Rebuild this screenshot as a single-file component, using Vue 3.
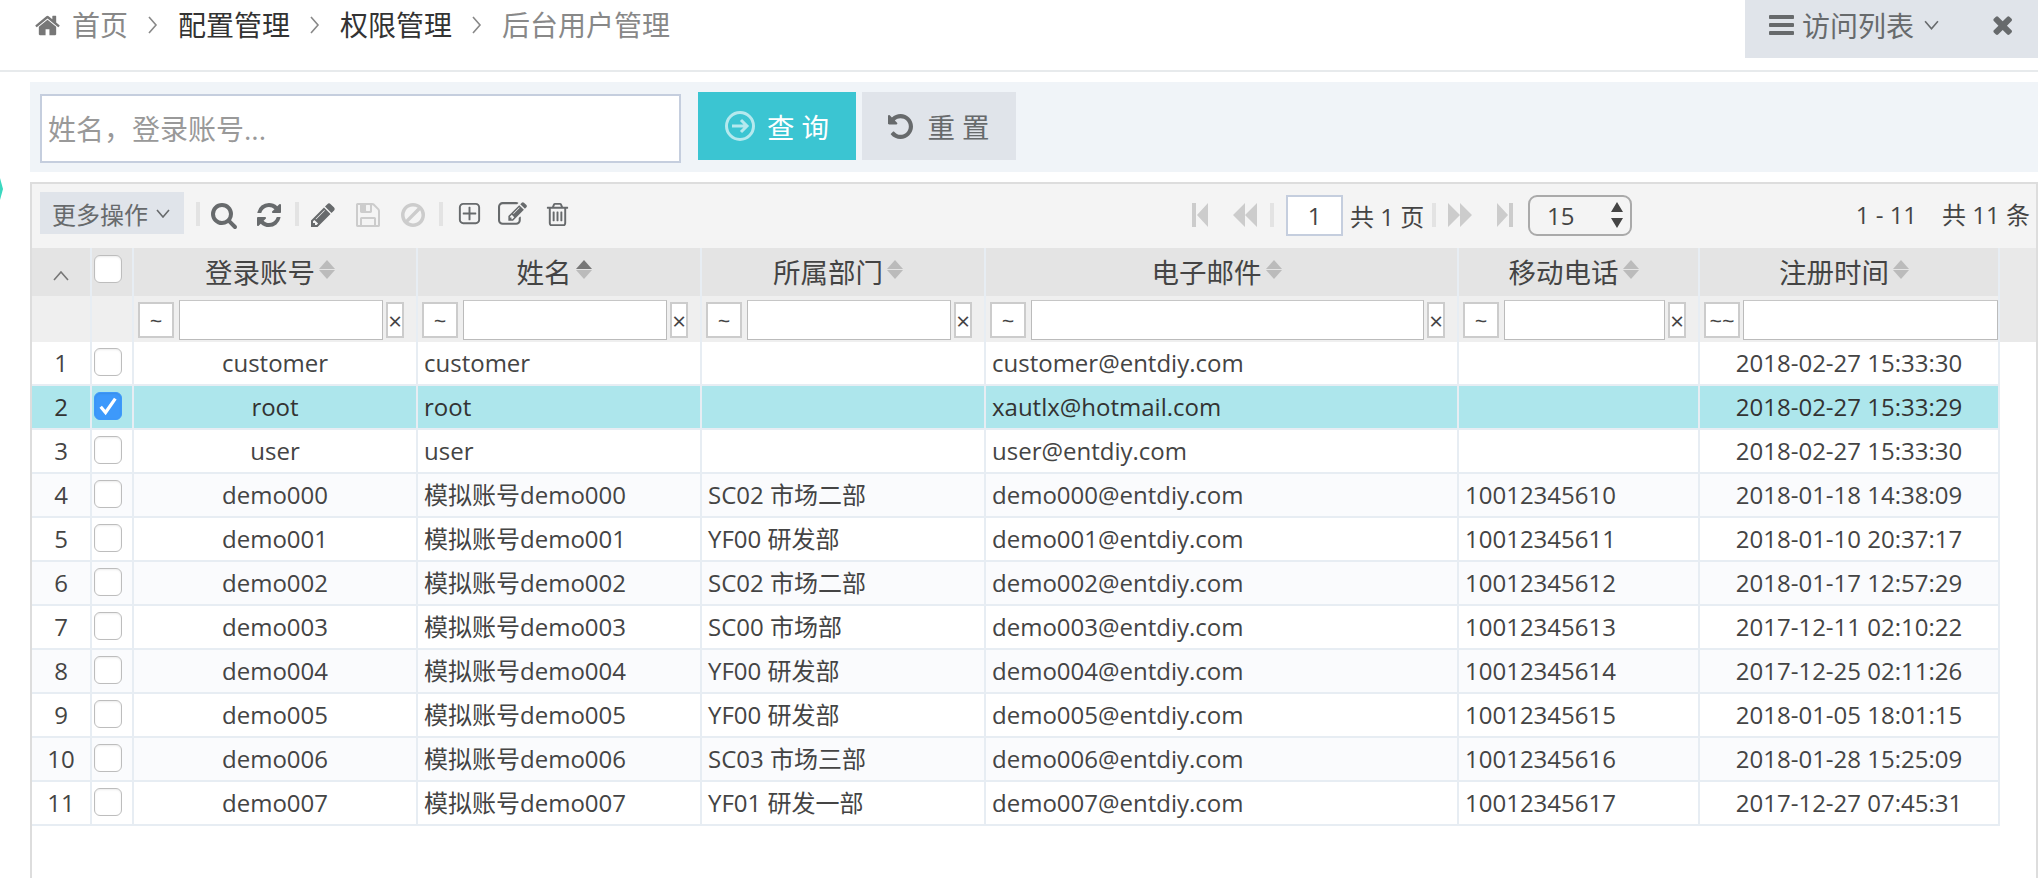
<template>
  <div class="page">
    <span class="edge-mark"></span>

    <header class="topbar">
      <nav class="crumbs">
        <svg class="ico home" viewBox="0 0 1792 1792"><path :d="icons.home" /></svg>
        <span class="crumb first">首页</span>
        <template v-for="(c, i) in crumbs" :key="c">
          <svg class="sep-chev" viewBox="0 0 10 20"><path d="M1 2l7 8-7 8" /></svg>
          <span class="crumb" :class="{ last: i === crumbs.length - 1 }">{{ c }}</span>
        </template>
      </nav>
      <div class="tabs-tool">
        <svg class="ico bars" viewBox="128 256 1536 1280" preserveAspectRatio="none"><path :d="icons.bars" /></svg>
        <span class="tabs-label">访问列表</span>
        <svg class="tabs-chev" viewBox="0 0 14 9"><path d="M1 1l6 7 6-7" /></svg>
        <svg class="ico closer" viewBox="150 350 1340 1204" preserveAspectRatio="none"><path :d="icons.times" /></svg>
      </div>
    </header>

    <section class="search">
      <input class="search-input" placeholder="姓名，登录账号..." />
      <button class="btn primary">
        <svg class="arrow-circle" viewBox="0 0 30 30">
          <circle cx="15" cy="15" r="13.5" />
          <path d="M7 15h15M16 9l6 6-6 6" />
        </svg>
        <span>查 询</span>
      </button>
      <button class="btn plain">
        <svg class="ico undo" viewBox="128 128 1536 1536"><path :d="icons.undo" /></svg>
        <span>重 置</span>
      </button>
    </section>

    <section class="grid">
      <div class="toolbar">
        <button class="more">更多操作<svg viewBox="0 0 14 9"><path d="M1 1l6 7 6-7" /></svg></button>
        <i class="tb-sep"></i>
        <svg class="tool" viewBox="0 0 1792 1792"><path :d="icons.search" /></svg>
        <svg class="tool" viewBox="0 0 1792 1792"><path :d="icons.refresh" /></svg>
        <i class="tb-sep"></i>
        <svg class="tool" viewBox="0 0 1792 1792"><path :d="icons.pencil" /></svg>
        <svg class="tool off" viewBox="0 0 1792 1792"><path :d="icons.save" /></svg>
        <svg class="tool off" viewBox="0 0 1792 1792"><path :d="icons.ban" /></svg>
        <i class="tb-sep"></i>
        <svg class="tool plus" viewBox="0 0 1792 1792"><path :d="icons.plus" /></svg>
        <svg class="tool edit" viewBox="0 0 1792 1792"><path :d="icons.edit" /></svg>
        <svg class="tool trash" viewBox="0 0 1792 1792"><path :d="icons.trash" /></svg>

        <div class="pager">
          <svg class="pg first-pg" viewBox="0 0 16 24"><path d="M0 0h4v24H0zM5 12L16 0v24z" /></svg>
          <svg class="pg double" viewBox="0 0 24 24"><path d="M0 12L12 0v24zM12 12L24 0v24z" /></svg>
          <i class="pg-sep"></i>
          <input class="page-no" value="1" />
          <span class="page-total">共 1 页</span>
          <i class="pg-sep"></i>
          <svg class="pg double next" viewBox="0 0 24 24"><path d="M0 0l12 12L0 24zM12 0l12 12-12 12z" /></svg>
          <svg class="pg last-pg" viewBox="0 0 16 24"><path d="M0 0l11 12L0 24zM12 0h4v24h-4z" /></svg>
          <div class="page-size">
            <span>15</span>
            <svg viewBox="0 0 12 26"><path d="M6 0l6 10H0zM0 16h12l-6 10z" /></svg>
          </div>
        </div>
        <div class="info"><span>1 - 11</span><span>共 11 条</span></div>
      </div>

      <table class="data">
        <colgroup>
          <col v-for="w in colWidths" :key="w.id" :style="{ width: w.px + 'px' }" />
        </colgroup>
        <thead>
          <tr class="head-row">
            <th class="fold">
              <svg viewBox="0 0 16 10"><path d="M1 9l7-8 7 8" /></svg>
            </th>
            <th class="check-cell"><span class="check head-check"></span></th>
            <th v-for="c in columns" :key="c.key">
              {{ c.title }}<span class="sort" :class="{ active: c.key === 'name' }"><b></b><b></b></span>
            </th>
            <th class="filler" rowspan="2"></th>
          </tr>
          <tr class="filter-row">
            <th></th>
            <th></th>
            <th v-for="c in columns" :key="c.key">
              <div class="filter">
                <span class="op" :class="{ wide: c.key === 'time' }">{{ c.key === 'time' ? '~~' : '~' }}</span>
                <input class="filter-input" />
                <span v-if="c.key !== 'time'" class="clear">×</span>
              </div>
            </th>
          </tr>
        </thead>
        <tbody>
          <tr v-for="(r, i) in rows" :key="r.login" :class="{ selected: i === 1, odd: i % 2 === 1 }">
            <td class="num">{{ i + 1 }}</td>
            <td class="check-cell">
              <span class="check" :class="{ on: i === 1 }">
                <svg v-if="i === 1" viewBox="0 0 16 16"><path d="M3.5 8.5l3 3.5 6-8.5" /></svg>
              </span>
            </td>
            <td class="center">{{ r.login }}</td>
            <td>{{ r.name }}</td>
            <td>{{ r.dept }}</td>
            <td>{{ r.email }}</td>
            <td>{{ r.phone }}</td>
            <td class="center">{{ r.time }}</td>
          </tr>
        </tbody>
      </table>
    </section>
  </div>
</template>

<script setup>
const crumbs = ['配置管理', '权限管理', '后台用户管理']

const icons = {
  home: 'M1472 992v480q0 26-19 45t-45 19h-384v-384h-256v384h-384q-26 0-45-19t-19-45v-480q0-1 .5-3t.5-3l575-474 575 474q1 2 1 6zm223-69l-62 74q-8 9-21 11h-3q-13 0-21-7l-692-577-692 577q-12 8-24 7-13-2-21-11l-62-74q-8-10-7-23.5t11-21.5l719-599q32-26 76-26t76 26l244 204v-195q0-14 9-23t23-9h192q14 0 23 9t9 23v408l219 182q10 8 11 21.5t-7 23.5z',
  bars: 'M1664 1344v128q0 26-19 45t-45 19h-1408q-26 0-45-19t-19-45v-128q0-26 19-45t45-19h1408q26 0 45 19t19 45zm0-512v128q0 26-19 45t-45 19h-1408q-26 0-45-19t-19-45v-128q0-26 19-45t45-19h1408q26 0 45 19t19 45zm0-512v128q0 26-19 45t-45 19h-1408q-26 0-45-19t-19-45v-128q0-26 19-45t45-19h1408q26 0 45 19t19 45z',
  times: 'M1490 1322q0 40-28 68l-136 136q-28 28-68 28t-68-28l-294-294-294 294q-28 28-68 28t-68-28l-136-136q-28-28-28-68t28-68l294-294-294-294q-28-28-28-68t28-68l136-136q28-28 68-28t68 28l294 294 294-294q28-28 68-28t68 28l136 136q28 28 28 68t-28 68l-294 294 294 294q28 28 28 68z',
  undo: 'M1664 896q0 156-61 298t-164 245-245 164-298 61q-172 0-327-72.5t-264-204.5q-7-10-6.5-22.5t8.5-20.5l137-138q10-9 25-9 16 2 23 12 73 95 179 147t225 52q104 0 198.5-40.5t163.5-109.5 109.5-163.5 40.5-198.5-40.5-198.5-109.5-163.5-163.5-109.5-198.5-40.5q-98 0-188 35.5t-160 101.5l137 138q31 30 14 69-17 40-59 40h-448q-26 0-45-19t-19-45v-448q0-42 40-59 39-17 69 14l130 129q107-101 244.5-156.5t284.5-55.5q156 0 298 61t245 164 164 245 61 298z',
  search: 'M1216 832q0-185-131.5-316.5t-316.5-131.5-316.5 131.5-131.5 316.5 131.5 316.5 316.5 131.5 316.5-131.5 131.5-316.5zm512 832q0 52-38 90t-90 38q-54 0-90-38l-343-342q-179 124-399 124-143 0-273.5-55.5t-225-150-150-225-55.5-273.5 55.5-273.5 150-225 225-150 273.5-55.5 273.5 55.5 225 150 150 225 55.5 273.5q0 220-124 399l343 343q37 37 37 90z',
  refresh: 'M1639 1056q0 5-1 7-64 268-268 434.5t-478 166.5q-146 0-282.5-55t-243.5-157l-129 129q-19 19-45 19t-45-19-19-45v-448q0-26 19-45t45-19h448q26 0 45 19t19 45-19 45l-137 137q71 66 161 102t187 36q134 0 250-65t186-179q11-17 53-117 8-23 30-23h192q13 0 22.5 9.5t9.5 22.5zm25-800v448q0 26-19 45t-45 19h-448q-26 0-45-19t-19-45 19-45l138-138q-148-137-349-137-134 0-250 65t-186 179q-11 17-53 117-8 23-30 23h-199q-13 0-22.5-9.5t-9.5-22.5v-7q65-268 270-434.5t480-166.5q146 0 284 55.5t245 156.5l130-129q19-19 45-19t45 19 19 45z',
  pencil: 'M491 1536l91-91-235-235-91 91v107h128v128h107zm523-928q0-22-22-22-10 0-17 7l-542 542q-7 7-7 17 0 22 22 22 10 0 17-7l542-542q7-7 7-17zm-54-192l416 416-832 832h-416v-416zm683 96q0 53-37 90l-166 166-416-416 166-165q36-38 90-38 53 0 91 38l235 234q37 39 37 91z',
  save: 'M512 1536h768v-384h-768v384zm896 0h128v-896q0-14-10-38.5t-20-34.5l-281-281q-10-10-34-20t-39-10v416q0 40-28 68t-68 28h-576q-40 0-68-28t-28-68v-416h-128v1280h128v-416q0-40 28-68t68-28h832q40 0 68 28t28 68v416zm-384-928v-320q0-13-9.5-22.5t-22.5-9.5h-192q-13 0-22.5 9.5t-9.5 22.5v320q0 13 9.5 22.5t22.5 9.5h192q13 0 22.5-9.5t9.5-22.5zm640 32v928q0 40-28 68t-68 28h-1344q-40 0-68-28t-28-68v-1344q0-40 28-68t68-28h928q40 0 88 20t76 48l280 280q28 28 48 76t20 88z',
  ban: 'M1440 893q0-161-87-295l-754 753q137 89 297 89 111 0 211.5-43.5t173.5-116.5 116-174.5 43-212.5zm-999 299l755-754q-135-91-300-91-148 0-273 73t-198 199-73 274q0 162 89 299zm1223-299q0 157-61 300t-163.5 246-245 164-298.5 61-298.5-61-245-164-163.5-246-61-300 61-299.5 163.5-245.5 245-164 298.5-61 298.5 61 245 164 163.5 245.5 61 299.5z',
  plus: 'M1344 800v64q0 14-9 23t-23 9h-352v352q0 14-9 23t-23 9h-64q-14 0-23-9t-9-23v-352h-352q-14 0-23-9t-9-23v-64q0-14 9-23t23-9h352v-352q0-14 9-23t23-9h64q14 0 23 9t9 23v352h352q14 0 23 9t9 23zm128 448v-832q0-66-47-113t-113-47h-832q-66 0-113 47t-47 113v832q0 66 47 113t113 47h832q66 0 113-47t47-113zm128-832v832q0 119-84.5 203.5t-203.5 84.5h-832q-119 0-203.5-84.5t-84.5-203.5v-832q0-119 84.5-203.5t203.5-84.5h832q119 0 203.5 84.5t84.5 203.5z',
  edit: 'M888 1184l116-116-152-152-116 116v56h96v96h56zm440-720q-16-16-33 1l-350 350q-17 17-1 33t33-1l350-350q17-17 1-33zm80 594v190q0 119-84.5 203.5t-203.5 84.5h-832q-119 0-203.5-84.5t-84.5-203.5v-832q0-119 84.5-203.5t203.5-84.5h832q63 0 117 25 15 7 18 23 3 17-9 29l-49 49q-14 14-32 8-23-6-45-6h-832q-66 0-113 47t-47 113v832q0 66 47 113t113 47h832q66 0 113-47t47-113v-126q0-13 9-22l64-64q15-15 35-7t20 29zm-96-738l288 288-672 672h-288v-288zm444 132l-92 92-288-288 92-92q28-28 68-28t68 28l152 152q28 28 28 68t-28 68z',
  trash: 'M704 736v576q0 14-9 23t-23 9h-64q-14 0-23-9t-9-23v-576q0-14 9-23t23-9h64q14 0 23 9t9 23zm256 0v576q0 14-9 23t-23 9h-64q-14 0-23-9t-9-23v-576q0-14 9-23t23-9h64q14 0 23 9t9 23zm256 0v576q0 14-9 23t-23 9h-64q-14 0-23-9t-9-23v-576q0-14 9-23t23-9h64q14 0 23 9t9 23zm128 724v-948h-896v948q0 22 7 40.5t14.5 27 10.5 8.5h832q3 0 10.5-8.5t14.5-27 7-40.5zm-672-1076h448l-48-117q-7-9-17-11h-317q-10 2-17 11zm928 32v64q0 14-9 23t-23 9h-96v948q0 83-47 143.5t-113 60.5h-832q-66 0-113-58.5t-47-141.5v-952h-96q-14 0-23-9t-9-23v-64q0-14 9-23t23-9h309l70-167q15-37 54-63t79-26h320q40 0 79 26t54 63l70 167h309q14 0 23 9t9 23z'
}

const colWidths = [60, 42, 284, 284, 284, 473, 241, 300, 36].map((px, id) => ({ id, px }))

const columns = [
  { key: 'login', title: '登录账号' },
  { key: 'name', title: '姓名' },
  { key: 'dept', title: '所属部门' },
  { key: 'email', title: '电子邮件' },
  { key: 'phone', title: '移动电话' },
  { key: 'time', title: '注册时间' }
]

const rows = [
  { login: 'customer', name: 'customer', dept: '', email: 'customer@entdiy.com', phone: '', time: '2018-02-27 15:33:30' },
  { login: 'root', name: 'root', dept: '', email: 'xautlx@hotmail.com', phone: '', time: '2018-02-27 15:33:29' },
  { login: 'user', name: 'user', dept: '', email: 'user@entdiy.com', phone: '', time: '2018-02-27 15:33:30' },
  { login: 'demo000', name: '模拟账号demo000', dept: 'SC02 市场二部', email: 'demo000@entdiy.com', phone: '10012345610', time: '2018-01-18 14:38:09' },
  { login: 'demo001', name: '模拟账号demo001', dept: 'YF00 研发部', email: 'demo001@entdiy.com', phone: '10012345611', time: '2018-01-10 20:37:17' },
  { login: 'demo002', name: '模拟账号demo002', dept: 'SC02 市场二部', email: 'demo002@entdiy.com', phone: '10012345612', time: '2018-01-17 12:57:29' },
  { login: 'demo003', name: '模拟账号demo003', dept: 'SC00 市场部', email: 'demo003@entdiy.com', phone: '10012345613', time: '2017-12-11 02:10:22' },
  { login: 'demo004', name: '模拟账号demo004', dept: 'YF00 研发部', email: 'demo004@entdiy.com', phone: '10012345614', time: '2017-12-25 02:11:26' },
  { login: 'demo005', name: '模拟账号demo005', dept: 'YF00 研发部', email: 'demo005@entdiy.com', phone: '10012345615', time: '2018-01-05 18:01:15' },
  { login: 'demo006', name: '模拟账号demo006', dept: 'SC03 市场三部', email: 'demo006@entdiy.com', phone: '10012345616', time: '2018-01-28 15:25:09' },
  { login: 'demo007', name: '模拟账号demo007', dept: 'YF01 研发一部', email: 'demo007@entdiy.com', phone: '10012345617', time: '2017-12-27 07:45:31' }
]
</script>

<style>
html,
body {
  margin: 0;
  height: 100%;
  overflow: hidden;
  background: #fff;
}
</style>

<style scoped>
.page {
  position: relative;
  width: 2038px;
  height: 878px;
  overflow: hidden;
  background: #fff;
  color: #333;
  font-family: "Open Sans", "Noto Sans CJK SC", sans-serif;
  font-size: 24px;
}

.edge-mark {
  position: absolute;
  left: -9px;
  top: 178px;
  width: 12px;
  height: 22px;
  background: #3bd8c0;
  clip-path: polygon(25% 0, 75% 0, 100% 50%, 75% 100%, 25% 100%, 0 50%);
}

.ico,
.tool,
.pg {
  display: block;
  flex: none;
  fill: currentColor;
}

/* top bar */
.topbar {
  display: flex;
  justify-content: space-between;
  align-items: flex-start;
  height: 70px;
  border-bottom: 2px solid #e7eaec;
}

.crumbs {
  display: flex;
  align-items: center;
  height: 50px;
  padding-left: 34px;
  font-size: 28px;
  color: #333;
}

.home {
  width: 27px;
  height: 27px;
  color: #777;
  margin-right: 11px;
}

.crumb {
  line-height: 50px;
}

.crumb.first,
.crumb.last {
  color: #888;
}

.sep-chev {
  width: 10px;
  height: 20px;
  margin: 0 20px;
  fill: none;
  stroke: #888;
  stroke-width: 1.6;
}

.tabs-tool {
  display: flex;
  align-items: center;
  width: 293px;
  height: 58px;
  padding: 0 0 8px 24px;
  box-sizing: border-box;
  background: #e0e4ea;
  color: #676a6c;
  font-size: 28px;
}

.bars {
  width: 25px;
  height: 20px;
  margin-right: 8px;
}

.tabs-chev {
  width: 15px;
  height: 10px;
  margin-left: 10px;
  fill: none;
  stroke: #676a6c;
  stroke-width: 1.5;
}

.closer {
  width: 21px;
  height: 19px;
  margin-left: 52px;
}

/* search form */
.search {
  display: flex;
  align-items: flex-start;
  height: 90px;
  margin: 10px 0 0 30px;
  padding: 10px 0 0 10px;
  box-sizing: border-box;
  background: #f0f4f8;
}

.search-input {
  width: 641px;
  height: 69px;
  margin: 2px 17px 0 0;
  padding: 0 6px;
  box-sizing: border-box;
  border: 2px solid #c5cede;
  background: #fff;
  outline: none;
  font: 28px "Open Sans", "Noto Sans CJK SC", sans-serif;
}

.search-input::placeholder {
  color: #999;
}

.btn {
  display: flex;
  align-items: center;
  justify-content: center;
  height: 68px;
  padding: 0;
  border: 0;
  font: 27.5px "Open Sans", "Noto Sans CJK SC", sans-serif;
}

.btn.primary {
  width: 158px;
  margin-right: 6px;
  background: #3bc5d2;
  color: #fff;
}

.btn.plain {
  width: 154px;
  background: #e0e4ea;
  color: #676a6c;
}

.arrow-circle {
  width: 30px;
  height: 30px;
  margin-right: 12px;
  fill: none;
  stroke: #b5e9ee;
  stroke-width: 3;
}

.undo {
  width: 25px;
  height: 25px;
  margin-right: 14px;
}

/* grid */
.grid {
  width: 2004px;
  height: 696px;
  margin: 10px 0 0 30px;
  border: 2px solid #ddd;
  border-bottom: 0;
}

.toolbar {
  position: relative;
  display: flex;
  align-items: flex-start;
  height: 64px;
  padding: 8px 0 0 8px;
  box-sizing: border-box;
  background: #f4f4f4;
  color: #676a6c;
}

.more {
  display: flex;
  align-items: center;
  flex: none;
  width: 144px;
  height: 42px;
  padding: 0 0 0 12px;
  box-sizing: border-box;
  border: 0;
  background: #e0e4ea;
  color: #676a6c;
  font: 24px "Open Sans", "Noto Sans CJK SC", sans-serif;
}

.more svg {
  width: 14px;
  height: 9px;
  margin-left: 8px;
  fill: none;
  stroke: #676a6c;
  stroke-width: 1.6;
}

.tb-sep {
  flex: none;
  width: 4px;
  height: 24px;
  margin: 10px 10px 0 12px;
  background: #e3e3e3;
}

.tool {
  width: 28px;
  height: 28px;
  margin-top: 9px;
  color: #676a6c;
}

.tool + .tool {
  margin-left: 17px;
}

.tool.off {
  color: #ccc;
}

.tool.plus {
  width: 27px;
  height: 27px;
  margin-left: 3px;
}

.tool.edit {
  width: 29px;
  height: 29px;
  margin-top: 8px;
  margin-left: 15px;
}

.tool.trash {
  width: 27px;
  height: 27px;
  margin-left: 17px;
}

.pager {
  position: absolute;
  left: 1160px;
  top: 10px;
  display: flex;
  align-items: center;
  height: 42px;
  color: #ccc;
}

.first-pg,
.last-pg {
  width: 16px;
  height: 24px;
}

.double {
  width: 24px;
  height: 24px;
}

.first-pg {
  margin-right: 25px;
}

.pg-sep {
  width: 4px;
  height: 24px;
  margin-left: 13px;
  margin-right: 12px;
  background: #e3e3e3;
}

.page-no {
  width: 57px;
  height: 41px;
  padding: 0;
  box-sizing: border-box;
  border: 2px solid #c5cede;
  background: #fff;
  outline: none;
  text-align: center;
  color: #444;
  font: 24px "Open Sans", sans-serif;
}

.page-total {
  margin-left: 7px;
  width: 69px;
  color: #444;
  white-space: nowrap;
}

.next {
  margin-right: 25px;
}

.last-pg {
  margin-right: 15px;
}

.page-size {
  display: flex;
  align-items: center;
  justify-content: space-between;
  width: 104px;
  height: 41px;
  padding: 0 7px 0 17px;
  box-sizing: border-box;
  border: 2px solid #aaa;
  border-radius: 9px;
  color: #444;
}

.page-size svg {
  width: 12px;
  height: 26px;
  fill: #444;
}

.info {
  position: absolute;
  right: 6px;
  top: 10px;
  display: flex;
  gap: 25px;
  line-height: 42px;
  color: #444;
}

/* table */
.data {
  width: 2004px;
  table-layout: fixed;
  border-collapse: separate;
  border-spacing: 0;
  font-size: 24px;
}

.data th,
.data td {
  padding: 0;
  box-sizing: border-box;
  border-right: 2px solid #e7edf3;
  border-bottom: 2px solid #e7edf3;
  overflow: hidden;
  white-space: nowrap;
}

.head-row th {
  height: 48px;
  padding-bottom: 3px;
  background: #e4e4e4;
  font-size: 27.5px;
  font-weight: 400;
  color: #444;
  text-align: center;
  border-bottom: 0;
}

.filter-row th {
  height: 46px;
  background: #efefef;
  font-weight: 400;
  border-bottom: 0;
}

.data th.filler {
  background: #e9e9e9;
  border: 0;
}

.fold svg {
  width: 16px;
  height: 10px;
  fill: none;
  stroke: #777;
  stroke-width: 1.6;
}

.sort {
  display: inline-flex;
  flex-direction: column;
  gap: 1px;
  margin: 0 10px 0 4px;
  vertical-align: 8px;
  transform: translateY(-6px);
}

.sort b {
  width: 0;
  height: 0;
  border-left: 8px solid transparent;
  border-right: 8px solid transparent;
  border-bottom: 9px solid #bbb;
}

.sort b + b {
  border-bottom: 0;
  border-top: 9px solid #bbb;
}

.sort.active b:first-child {
  border-bottom-color: #777;
}

.filter {
  display: flex;
  align-items: center;
  height: 46px;
  padding: 2px 0 0 4px;
  box-sizing: border-box;
}

.op,
.clear {
  display: flex;
  align-items: center;
  justify-content: center;
  height: 36px;
  box-sizing: border-box;
  border: 2px solid #ccc;
  background: #fff;
  color: #444;
  font-size: 22px;
}

.op {
  flex: none;
  width: 36px;
  margin-right: 5px;
}

.op.wide {
  margin-right: 3px;
}

.filter-input {
  flex: 1;
  min-width: 0;
  height: 40px;
  padding: 0;
  box-sizing: border-box;
  border: 1px solid #bbb;
  border-top-color: #c6c6c6;
  background: #fff;
  outline: none;
}

.clear {
  flex: none;
  width: 18px;
  margin: 0 12px 0 3px;
  font-size: 24px;
}

.data td {
  height: 44px;
  padding: 0 6px;
  background: #fff;
  color: #444;
  line-height: 40px;
}

.data tr.odd td {
  background: #fafbfd;
}

.data td.center,
.data td.num {
  text-align: center;
}

.data tr.selected td {
  background: #ade6ec;
  color: #333;
}

.check-cell {
  text-align: left;
}

.data td.check-cell {
  padding: 0;
}

.check {
  display: block;
  width: 28px;
  height: 28px;
  margin: 0 0 2px 2px;
  box-sizing: border-box;
  border: 1px solid #bdbdbd;
  border-radius: 6px;
  background: #fff;
  box-shadow: inset 0 1px 2px rgba(0, 0, 0, 0.08);
}

.head-check {
  margin-bottom: 4px;
}

.check.on {
  border-color: #3d99fb;
  background: #3d99fb;
}

.check.on svg {
  display: block;
  width: 100%;
  height: 100%;
  fill: none;
  stroke: #fff;
  stroke-width: 2;
}
</style>
